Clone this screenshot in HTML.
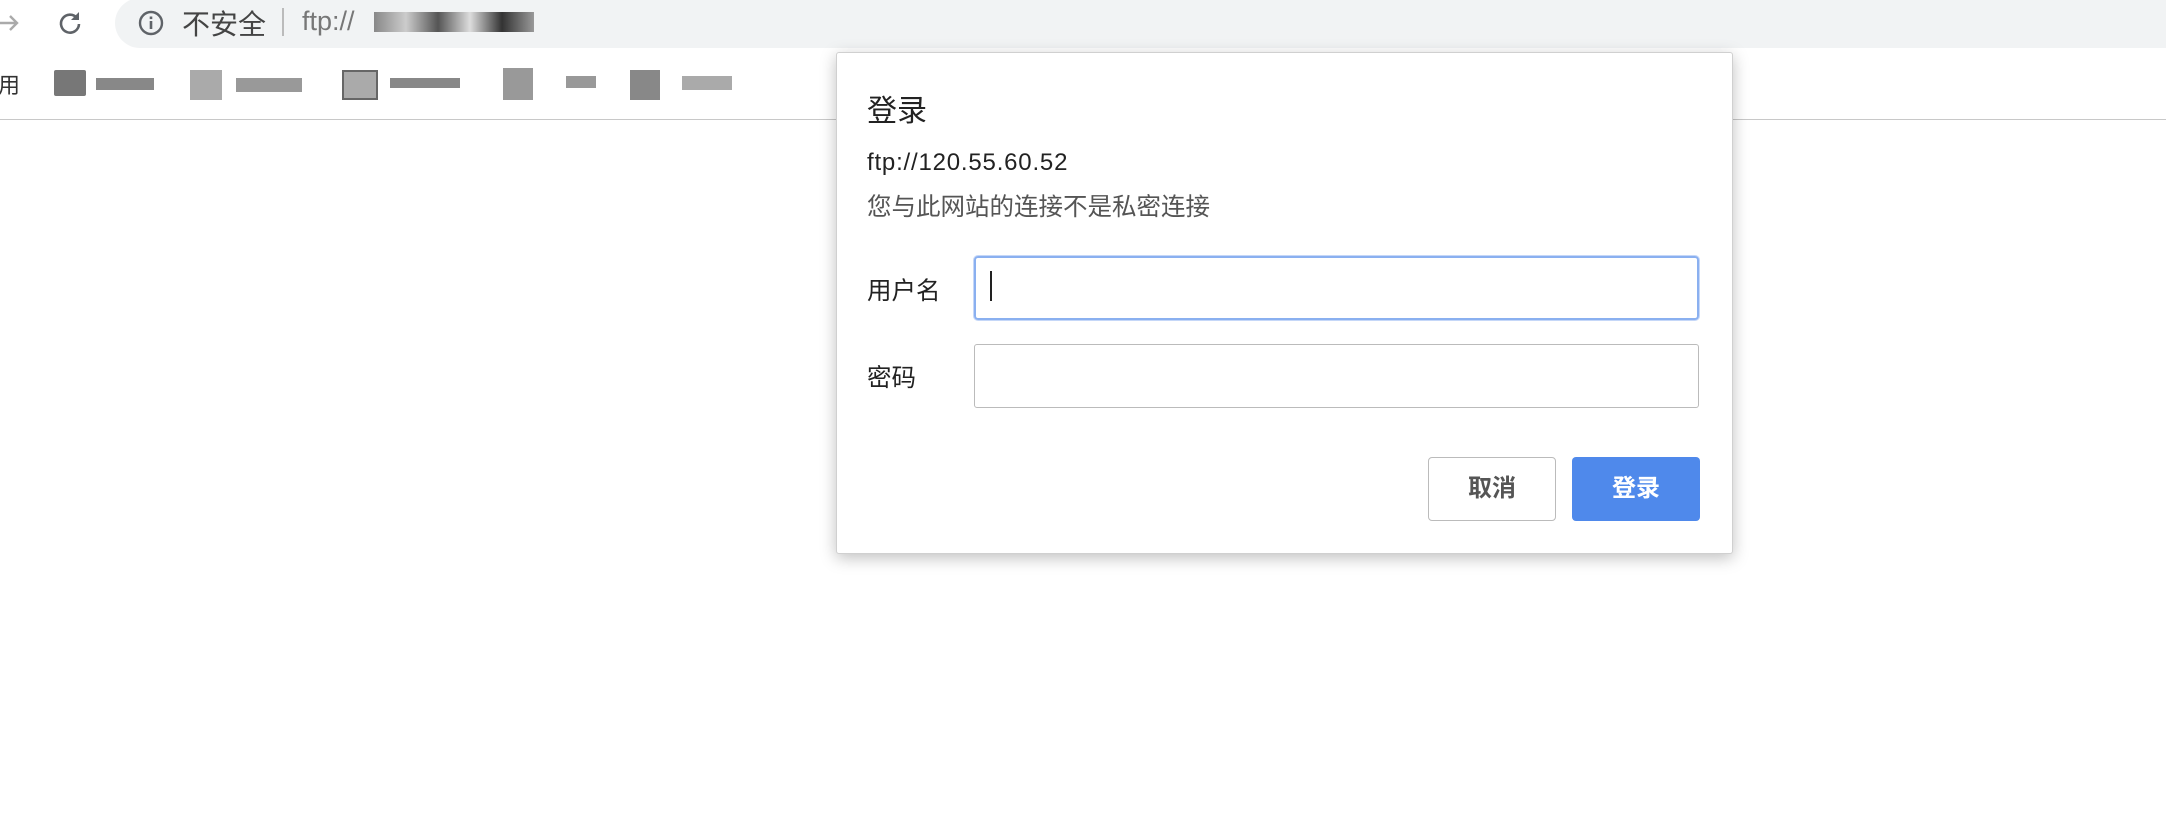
<!DOCTYPE html>
<html><head><meta charset="utf-8"><style>
body{margin:0;width:2166px;height:816px;background:#fff;position:relative;overflow:hidden;font-family:"Liberation Sans","Noto Sans CJK SC",sans-serif;}
.a{position:absolute;}
.t{white-space:nowrap;}
</style></head><body>
<div class="a" style="left:0;top:0;width:2166px;height:48px;background:#fff"></div>
<div class="a" style="left:115px;top:-2px;width:2100px;height:50px;border-radius:25px;background:#f1f3f4"></div>
<svg class="a" style="left:0;top:8px" width="30" height="30" viewBox="0 0 30 30"><path d="M0 15h16M10 8l7 7-7 7" stroke="#aaa" stroke-width="2.4" fill="none"/></svg>
<svg class="a" style="left:55px;top:7px" width="30" height="30" viewBox="0 0 30 30"><path d="M22 11A9 9 0 1 0 24 17" stroke="#5f6368" stroke-width="2.6" fill="none"/><path d="M24 5v8h-8z" fill="#5f6368"/></svg>
<svg class="a" style="left:136px;top:8px" width="30" height="30" viewBox="0 0 30 30"><circle cx="15" cy="15" r="11" stroke="#5f6368" stroke-width="2.4" fill="none"/><rect x="13.7" y="13" width="2.6" height="8" fill="#5f6368"/><rect x="13.7" y="8.5" width="2.6" height="2.6" fill="#5f6368"/></svg>
<div class="a t" style="left:182px;top:3px;font-size:28px;color:#444">不安全</div>
<div class="a" style="left:282px;top:8px;width:2px;height:28px;background:#bbb"></div>
<div class="a t" style="left:302px;top:6px;font-size:27px;color:#777">ftp://</div>
<div class="a" style="left:374px;top:12px;width:160px;height:20px;background:linear-gradient(90deg,#888,#ccc 20%,#555 40%,#ddd 60%,#333 80%,#999)"></div>
<div class="a t" style="left:-2px;top:68px;font-size:22px;color:#333">用</div>
<div class="a" style="left:54px;top:70px;width:32px;height:26px;background:#777;border-radius:2px"></div><div class="a" style="left:96px;top:78px;width:58px;height:12px;background:#888"></div>
<div class="a" style="left:190px;top:70px;width:32px;height:30px;background:#aaa"></div><div class="a" style="left:236px;top:78px;width:66px;height:14px;background:#999"></div>
<div class="a" style="left:342px;top:70px;width:32px;height:26px;background:#aaa;border:2px solid #666"></div><div class="a" style="left:390px;top:78px;width:70px;height:10px;background:#888"></div>
<div class="a" style="left:503px;top:68px;width:30px;height:32px;background:#999"></div><div class="a" style="left:566px;top:76px;width:30px;height:12px;background:#999"></div>
<div class="a" style="left:630px;top:70px;width:30px;height:30px;background:#888"></div><div class="a" style="left:682px;top:76px;width:50px;height:14px;background:#aaa"></div>
<div class="a" style="left:0;top:119px;width:2166px;height:1px;background:#c8c8c8"></div>
<div class="a" style="left:836px;top:52px;width:895px;height:500px;background:#fff;border:1px solid #d0d0d0;border-radius:3px;box-shadow:0 4px 16px rgba(0,0,0,.25)"></div>
<div class="a t" style="left:867px;top:86px;font-size:30px;color:#222">登录</div>
<div class="a t" style="left:867px;top:149px;font-size:24px;letter-spacing:0.8px;color:#222">ftp://120.55.60.52</div>
<div class="a t" style="left:867px;top:188px;font-size:24.5px;color:#555">您与此网站的连接不是私密连接</div>
<div class="a t" style="left:867px;top:272px;font-size:24.5px;color:#222">用户名</div>
<div class="a" style="left:974px;top:256px;width:721px;height:60px;border:2px solid #8ab0f0;border-radius:4px;box-shadow:0 0 0 1px #c5d7f8"></div>
<div class="a" style="left:990px;top:271px;width:2px;height:30px;background:#222"></div>
<div class="a t" style="left:867px;top:359px;font-size:24.5px;color:#222">密码</div>
<div class="a" style="left:974px;top:344px;width:723px;height:62px;border:1px solid #bbb;border-radius:3px"></div>
<div class="a" style="left:1428px;top:457px;width:126px;height:62px;border:1px solid #bbb;border-radius:4px;font-size:24px;color:#555;font-weight:bold;text-align:center;line-height:62px">取消</div>
<div class="a" style="left:1572px;top:457px;width:128px;height:64px;background:#4f89eb;border-radius:4px;font-size:24px;color:#fff;font-weight:bold;text-align:center;line-height:64px">登录</div>
</body></html>
